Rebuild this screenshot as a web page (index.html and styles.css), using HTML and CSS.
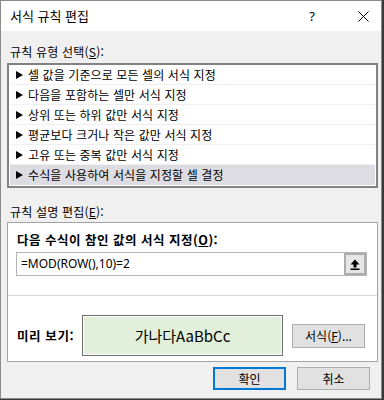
FILE: index.html
```html
<!DOCTYPE html>
<html lang="ko">
<head>
<meta charset="utf-8">
<title>서식 규칙 편집</title>
<link rel="stylesheet" href="styles.css">
</head>
<body>
<div class="win">
  <div class="titlebar">
    <span class="title">서식 규칙 편집</span>
    <span class="help">?</span>
    <svg class="close" width="11" height="11" viewBox="0 0 11 11"><path d="M0.5 0.5 L10.5 10.5 M10.5 0.5 L0.5 10.5" stroke="#000" stroke-width="1" fill="none"/></svg>
  </div>
  <div class="content">
    <div class="label">규칙 유형 선택(<u>S</u>):</div>
    <div class="list">
      <div class="item"><span class="arrow"></span>셀 값을 기준으로 모든 셀의 서식 지정</div>
      <div class="item"><span class="arrow"></span>다음을 포함하는 셀만 서식 지정</div>
      <div class="item"><span class="arrow"></span>상위 또는 하위 값만 서식 지정</div>
      <div class="item"><span class="arrow"></span>평균보다 크거나 작은 값만 서식 지정</div>
      <div class="item"><span class="arrow"></span>고유 또는 중복 값만 서식 지정</div>
      <div class="item selected"><span class="arrow"></span>수식을 사용하여 서식을 지정할 셀 결정</div>
    </div>
    <div class="label label2">규칙 설명 편집(<u>E</u>):</div>
    <div class="desc">
      <div class="desc-top">
        <div class="bold">다음 수식이 참인 값의 서식 지정(<u>O</u>):</div>
        <div class="input">
          <span class="formula">=MOD(ROW(),10)=2</span>
          <span class="refbtn"><svg width="10" height="11" viewBox="0 0 10 11"><path d="M5 0.5 L9.5 5.5 H6.5 V8.5 H3.5 V5.5 H0.5 Z" fill="#000"/><rect x="0.5" y="9.5" width="9" height="1.5" fill="#000"/></svg></span>
        </div>
      </div>
      <div class="preview-row">
        <span class="bold preview-label">미리 보기:</span>
        <div class="preview">가나다AaBbCc</div>
        <span class="btn fmt">서식(<u>F</u>)...</span>
      </div>
    </div>
    <div class="actions">
      <span class="btn ok">확인</span>
      <span class="btn">취소</span>
    </div>
  </div>
</div>
</body>
</html>
```

FILE: styles.css
```css
html, body {
  margin: 0;
  padding: 0;
}
body {
  width: 384px;
  height: 400px;
  background: #3a3a3a;
  overflow: hidden;
}
.win {
  width: 382px;
  height: 399px;
  box-sizing: border-box;
  border: 1px solid #8c8c8c;
  background: #f0f0f0;
  display: flex;
  flex-direction: column;
  font-family: "Noto Sans CJK KR", "Noto Sans", sans-serif;
  font-size: 12px;
  color: #000;
}
.titlebar {
  height: 30px;
  background: #fff;
  display: flex;
  align-items: center;
  padding-left: 9px;
  flex-shrink: 0;
}
.title {
  font-size: 13px;
  line-height: 16px;
}
.help {
  margin-left: auto;
  font-family: "Noto Sans", sans-serif;
  font-size: 13px;
  line-height: 16px;
}
.close {
  margin-left: 43px;
  margin-right: 12px;
}
.content {
  padding: 13px 0 0 6px;
  display: flex;
  flex-direction: column;
}
.label {
  line-height: 16px;
  padding-left: 3px;
  letter-spacing: 0.2px;
}
u {
  text-decoration: underline;
  text-underline-offset: 1px;
}
.list {
  margin-top: 3px;
  width: 371px;
  box-sizing: border-box;
  border: 2px solid #828282;
  background: #fff;
  padding: 0 1px 1px 1px;
}
.item {
  height: 19px;
  border-bottom: 1px solid #f0f0f0;
  display: flex;
  align-items: center;
  padding-left: 6px;
  line-height: 19px;
  white-space: nowrap;
  letter-spacing: 0.1px;
}
.item.selected {
  background: #dcdce2;
  border-bottom-color: transparent;
}
.arrow {
  width: 0;
  height: 0;
  border-top: 4px solid transparent;
  border-bottom: 4px solid transparent;
  border-left: 7px solid #000;
  margin-right: 5px;
}
.label2 {
  margin-top: 16px;
}
.desc {
  margin-top: 2px;
  width: 371px;
  height: 140px;
  box-sizing: border-box;
  border: 1px solid #a3a3a3;
  background: #fff;
}
.desc-top {
  padding: 9px 0 19px 8px;
  border-bottom: 1px solid #d7d7d7;
}
.bold {
  font-weight: 700;
  font-size: 12.5px;
  letter-spacing: 0.5px;
  line-height: 16px;
  padding-left: 1px;
}
.input {
  margin-top: 4px;
  width: 351px;
  height: 24px;
  box-sizing: border-box;
  border: 1px solid #b4b4b4;
  display: flex;
  align-items: center;
  padding-left: 4px;
}
.formula {
  font-family: "Noto Sans", sans-serif;
  font-size: 12px;
  line-height: 16px;
}
.refbtn {
  margin-left: auto;
  width: 22px;
  height: 22px;
  box-sizing: border-box;
  border: 2px solid #adadad;
  background: #e6e6e6;
  display: flex;
  align-items: center;
  justify-content: center;
}
.preview-row {
  display: flex;
  align-items: center;
  padding: 19px 0 0 8px;
}
.preview-label {
  width: 65px;
  letter-spacing: 0.6px;
}
.preview {
  width: 201px;
  height: 41px;
  box-sizing: border-box;
  border: 1px solid #6e6e6e;
  box-shadow: inset 0 0 0 1px #fff;
  background: #e2efda;
  display: flex;
  align-items: center;
  justify-content: center;
  font-size: 15px;
  line-height: 20px;
  padding-top: 1px;
}
.btn {
  width: 73px;
  height: 23px;
  box-sizing: border-box;
  border: 1px solid #adadad;
  background: #e1e1e1;
  display: flex;
  align-items: center;
  justify-content: center;
  line-height: 16px;
}
.fmt {
  margin-left: 9px;
  height: 24px;
}
.ok {
  border: 2px solid #0078d7;
}
.actions {
  display: flex;
  justify-content: flex-end;
  gap: 11px;
  margin-top: 5px;
  padding-right: 11px;
}
```
